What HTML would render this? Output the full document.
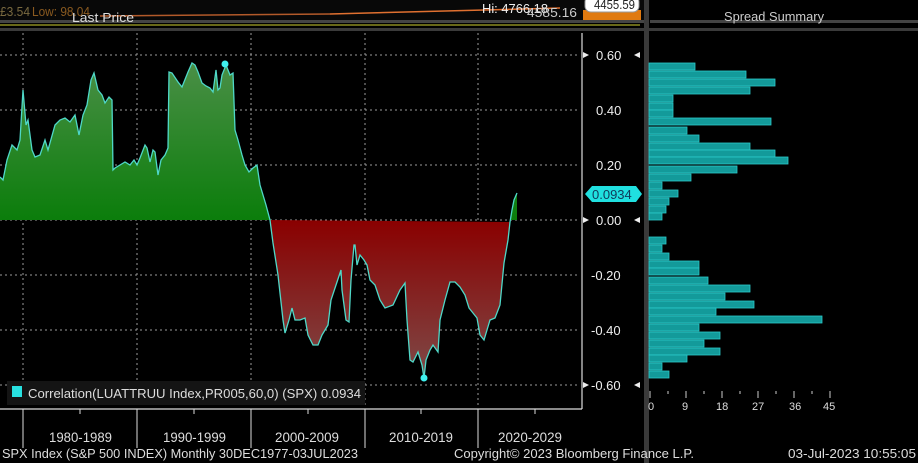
<!DOCTYPE html>
<html><head><meta charset="utf-8"><style>
html,body{margin:0;padding:0;background:#000;width:918px;height:463px;overflow:hidden}
svg{display:block}
text{font-family:"Liberation Sans Narrow","Liberation Sans",sans-serif}
</style></head><body>
<svg width="918" height="463" viewBox="0 0 918 463" xmlns="http://www.w3.org/2000/svg">
<defs>
<linearGradient id="gg" x1="0" y1="63" x2="0" y2="220" gradientUnits="userSpaceOnUse">
<stop offset="0" stop-color="#4a8f46"/><stop offset="1" stop-color="#0b7d0b"/></linearGradient>
<linearGradient id="rg" x1="0" y1="220" x2="0" y2="378" gradientUnits="userSpaceOnUse">
<stop offset="0" stop-color="#8a0000"/><stop offset="1" stop-color="#7e4a48"/></linearGradient>
<clipPath id="cg"><rect x="0" y="0" width="600" height="220"/></clipPath>
<clipPath id="cr"><rect x="0" y="220" width="600" height="200"/></clipPath>
</defs>
<rect x="0" y="0" width="645" height="20" fill="#080808"/>
<rect x="0" y="20" width="645" height="3" fill="#444"/>
<rect x="0" y="28" width="918" height="3" fill="#3a3a3a"/>
<rect x="650" y="20" width="268" height="3" fill="#444"/>
<line x1="0" y1="25" x2="640" y2="25" stroke="#8a8a20" stroke-width="1.5"/>
<line x1="100" y1="16" x2="330" y2="14" stroke="#b35a2a" stroke-width="1.5"/>
<line x1="330" y1="14" x2="560" y2="8" stroke="#e07030" stroke-width="1.5"/>
<text x="0" y="16" font-size="13" fill="#7a6a40" textLength="30" lengthAdjust="spacingAndGlyphs">£3.54</text>
<text x="32" y="16" font-size="13" fill="#8a5a20" textLength="58" lengthAdjust="spacingAndGlyphs">Low: 98.04</text>
<text x="72" y="22" font-size="13" fill="#ddd" textLength="62" lengthAdjust="spacingAndGlyphs">Last Price</text>
<text x="482" y="13" font-size="13" fill="#eee" textLength="66" lengthAdjust="spacingAndGlyphs">Hi: 4766.18</text>
<text x="527" y="17" font-size="13" fill="#ccc" textLength="50" lengthAdjust="spacingAndGlyphs">4585.16</text>
<rect x="583" y="10" width="58" height="10" fill="#e07a10"/>
<rect x="585" y="-4" width="54" height="16" rx="6" fill="#fff" stroke="#999"/>
<text x="594" y="9" font-size="13" fill="#222" textLength="41" lengthAdjust="spacingAndGlyphs">4455.59</text>
<text x="724" y="21" font-size="13" fill="#ccc" textLength="100" lengthAdjust="spacingAndGlyphs">Spread Summary</text>
<rect x="644" y="0" width="5" height="463" fill="#3a3a3a"/>
<g stroke="#9a9a9a" stroke-width="1" stroke-dasharray="2,3">
<line x1="0" y1="55" x2="580" y2="55"/><line x1="0" y1="110" x2="580" y2="110"/>
<line x1="0" y1="165" x2="580" y2="165"/><line x1="0" y1="220" x2="580" y2="220"/>
<line x1="0" y1="275" x2="580" y2="275"/><line x1="0" y1="330" x2="580" y2="330"/>
<line x1="0" y1="385" x2="580" y2="385"/>
<line x1="23" y1="33" x2="23" y2="408"/><line x1="137" y1="33" x2="137" y2="408"/>
<line x1="251" y1="33" x2="251" y2="408"/><line x1="365" y1="33" x2="365" y2="408"/>
<line x1="478" y1="33" x2="478" y2="408"/>
</g>
<polygon clip-path="url(#cg)" fill="url(#gg)" points="0,220 0,177 3,180 7,160 12,145 17,150 20,140 23,90 26,125 28,120 32,150 35,157 40,155 45,140 48,150 55,125 60,120 65,118 70,122 75,115 79,135 83,115 87,105 91,80 94,73 98,90 102,95 105,103 109,97 112,100 113,170 115,168 120,165 125,162 130,165 134,160 137,165 140,158 145,145 147,148 150,162 153,150 155,152 158,175 161,160 165,155 168,148 169,72 172,73 178,82 182,87 188,72 192,63 195,65 198,72 202,83 206,86 210,88 213,92 216,70 218,90 220,88 222,75 226,65 230,75 233,73 235,130 238,140 242,155 245,165 249,172 253,168 257,165 260,185 263,195 266,205 270,220 510,222 512,210 514,200 517,193 517,220"/>
<polygon clip-path="url(#cr)" fill="url(#rg)" points="270,220 273,243 278,275 283,320 285,333 289,320 292,308 295,320 298,320 300,320 305,318 308,335 313,345 318,345 322,335 328,325 331,300 341,270 342,290 346,320 349,322 351,280 354,245 355,245 357,265 360,255 364,260 367,265 370,280 375,285 380,300 385,308 393,305 400,290 405,283 407,320 410,360 413,362 418,352 422,365 424,378 426,360 430,350 433,345 438,352 440,320 445,300 450,282 455,282 460,287 465,295 469,308 477,318 480,335 484,340 487,330 490,320 495,318 500,305 504,263 508,240 510,222"/>
<polyline fill="none" stroke="#4fd8c8" stroke-width="1.3" points="0,177 3,180 7,160 12,145 17,150 20,140 23,90 26,125 28,120 32,150 35,157 40,155 45,140 48,150 55,125 60,120 65,118 70,122 75,115 79,135 83,115 87,105 91,80 94,73 98,90 102,95 105,103 109,97 112,100 113,170 115,168 120,165 125,162 130,165 134,160 137,165 140,158 145,145 147,148 150,162 153,150 155,152 158,175 161,160 165,155 168,148 169,72 172,73 178,82 182,87 188,72 192,63 195,65 198,72 202,83 206,86 210,88 213,92 216,70 218,90 220,88 222,75 226,65 230,75 233,73 235,130 238,140 242,155 245,165 249,172 253,168 257,165 260,185 263,195 266,205 270,220 273,243 278,275 283,320 285,333 289,320 292,308 295,320 298,320 300,320 305,318 308,335 313,345 318,345 322,335 328,325 331,300 341,270 342,290 346,320 349,322 351,280 354,245 355,245 357,265 360,255 364,260 367,265 370,280 375,285 380,300 385,308 393,305 400,290 405,283 407,320 410,360 413,362 418,352 422,365 424,378 426,360 430,350 433,345 438,352 440,320 445,300 450,282 455,282 460,287 465,295 469,308 477,318 480,335 484,340 487,330 490,320 495,318 500,305 504,263 508,240 510,222 512,210 514,200 517,193"/>
<circle cx="225" cy="64" r="3.5" fill="#3ff0ee"/>
<circle cx="424" cy="378" r="3.5" fill="#3ff0ee"/>
<line x1="582" y1="33" x2="582" y2="409" stroke="#ddd" stroke-width="1.2"/>
<line x1="0" y1="409" x2="582" y2="409" stroke="#ddd" stroke-width="1.2"/>
<g stroke="#ddd"><line x1="23" y1="409" x2="23" y2="448"/><line x1="80" y1="409" x2="80" y2="414"/><line x1="137" y1="409" x2="137" y2="448"/><line x1="194" y1="409" x2="194" y2="414"/><line x1="251" y1="409" x2="251" y2="448"/><line x1="308" y1="409" x2="308" y2="414"/><line x1="365" y1="409" x2="365" y2="448"/><line x1="421" y1="409" x2="421" y2="414"/><line x1="478" y1="409" x2="478" y2="448"/><line x1="535" y1="409" x2="535" y2="414"/></g>
<rect x="7" y="381" width="358" height="24" fill="#141414"/>
<rect x="12" y="386" width="10" height="11" fill="#28e0e0"/>
<text x="28" y="398" font-size="13" fill="#ddd" textLength="333" lengthAdjust="spacingAndGlyphs">Correlation(LUATTRUU Index,PR005,60,0) (SPX) 0.0934</text>
<g font-size="13" fill="#eee">
<text x="596" y="60">0.60</text><text x="596" y="115">0.40</text><text x="596" y="170">0.20</text>
<text x="596" y="225">0.00</text><text x="591" y="280">-0.20</text><text x="591" y="335">-0.40</text><text x="591" y="390">-0.60</text>
</g>
<g fill="#eee">
<polygon points="583,52 589,55 583,58"/><polygon points="640,52 634,55 640,58"/>
<polygon points="583,217 589,220 583,223"/><polygon points="640,217 634,220 640,223"/>
<polygon points="583,382 589,385 583,388"/><polygon points="640,382 634,385 640,388"/>
</g>
<polygon points="585,194 592,186 636,186 642,194 636,202 592,202" fill="#20e0e0"/>
<text x="592" y="199" font-size="13" fill="#103a5a">0.0934</text>
<g fill="#139a9a" stroke="#2ccaca" stroke-width="0.8">
<rect x="649" y="63" width="46" height="7"/><rect x="649" y="71" width="97" height="7"/><rect x="649" y="79" width="126" height="7"/><rect x="649" y="87" width="101" height="7"/>
<rect x="649" y="95" width="24" height="7"/><rect x="649" y="103" width="24" height="7"/><rect x="649" y="110" width="24" height="7"/><rect x="649" y="118" width="122" height="7"/>
<rect x="649" y="127" width="38" height="7"/><rect x="649" y="135" width="50" height="7"/><rect x="649" y="143" width="101" height="7"/><rect x="649" y="150" width="126" height="7"/>
<rect x="649" y="157" width="139" height="7"/><rect x="649" y="166" width="88" height="7"/><rect x="649" y="174" width="42" height="7"/><rect x="649" y="182" width="13" height="7"/>
<rect x="649" y="190" width="29" height="7"/><rect x="649" y="198" width="20" height="7"/><rect x="649" y="206" width="17" height="7"/><rect x="649" y="213" width="13" height="7"/>
<rect x="649" y="237" width="17" height="7"/><rect x="649" y="245" width="13" height="7"/><rect x="649" y="253" width="20" height="7"/><rect x="649" y="261" width="50" height="7"/>
<rect x="649" y="268" width="50" height="7"/><rect x="649" y="277" width="59" height="7"/><rect x="649" y="285" width="101" height="7"/><rect x="649" y="293" width="76" height="7"/>
<rect x="649" y="301" width="105" height="7"/><rect x="649" y="308" width="67" height="7"/><rect x="649" y="316" width="173" height="7"/><rect x="649" y="324" width="50" height="7"/>
<rect x="649" y="332" width="71" height="7"/><rect x="649" y="340" width="55" height="7"/><rect x="649" y="348" width="71" height="7"/><rect x="649" y="355" width="38" height="7"/>
<rect x="649" y="363" width="13" height="7"/><rect x="649" y="371" width="20" height="7"/>
</g>
<g stroke="#ccc"><line x1="650" y1="391" x2="650" y2="398"/><line x1="668" y1="391" x2="668" y2="394"/><line x1="686" y1="391" x2="686" y2="398"/><line x1="704" y1="391" x2="704" y2="394"/><line x1="722" y1="391" x2="722" y2="398"/><line x1="740" y1="391" x2="740" y2="394"/><line x1="758" y1="391" x2="758" y2="398"/><line x1="776" y1="391" x2="776" y2="394"/><line x1="794" y1="391" x2="794" y2="398"/><line x1="812" y1="391" x2="812" y2="394"/><line x1="830" y1="391" x2="830" y2="398"/></g>
<g font-size="11" fill="#ddd">
<text x="648" y="410">0</text><text x="682" y="410">9</text><text x="716" y="410">18</text><text x="752" y="410">27</text><text x="789" y="410">36</text><text x="823" y="410">45</text>
</g>
<g font-size="14" fill="#ddd">
<text x="49" y="442" textLength="63" lengthAdjust="spacingAndGlyphs">1980-1989</text><text x="163" y="442" textLength="63" lengthAdjust="spacingAndGlyphs">1990-1999</text>
<text x="275" y="442" textLength="64" lengthAdjust="spacingAndGlyphs">2000-2009</text><text x="389" y="442" textLength="64" lengthAdjust="spacingAndGlyphs">2010-2019</text>
<text x="498" y="442" textLength="64" lengthAdjust="spacingAndGlyphs">2020-2029</text>
</g>
<g font-size="12.5" fill="#ddd">
<text x="2" y="458" textLength="356" lengthAdjust="spacingAndGlyphs">SPX Index (S&amp;P 500 INDEX)  Monthly 30DEC1977-03JUL2023</text>
<text x="454" y="458" textLength="240" lengthAdjust="spacingAndGlyphs">Copyright© 2023 Bloomberg Finance L.P.</text>
<text x="788" y="458" textLength="128" lengthAdjust="spacingAndGlyphs">03-Jul-2023 10:55:05</text>
</g>
</svg>
</body></html>
